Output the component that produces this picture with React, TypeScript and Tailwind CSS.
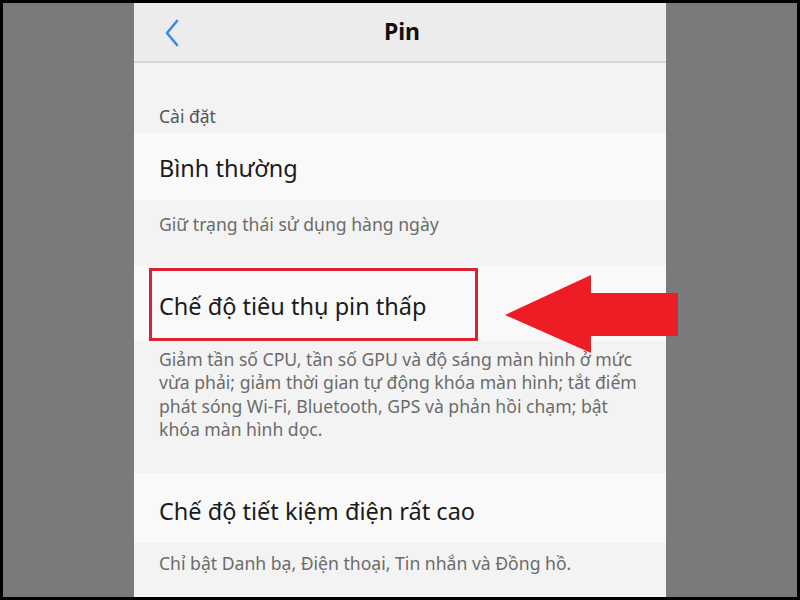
import React from "react";

const font = { fontFamily: "'Noto Sans', 'Open Sans', Arial, sans-serif" };

function BackChevron() {
  return (
    <svg width="20" height="30" viewBox="0 0 20 30" fill="none">
      <path d="M15 3 L5 15 L15 27" stroke="#3b8de0" strokeWidth="2.6" strokeLinecap="round" strokeLinejoin="round" />
    </svg>
  );
}

function Arrow() {
  return (
    <svg className="absolute left-[500px] top-[270px]" width="180" height="82" viewBox="0 0 180 82">
      <polygon points="2,42 88,2 88,20 175,20 175,63 88,63 88,80" fill="#ee1c25" />
    </svg>
  );
}

export default function App() {
  return (
    <div className="w-[800px] h-[600px] bg-black p-[3px]" style={font}>
      <div className="relative flex h-full bg-[#7b7a7b]">
        <div className="w-[131px] shrink-0" />
        <div className="w-[532px] shrink-0 flex flex-col bg-[#f3f3f3] overflow-hidden">
          {/* top bar */}
          <div className="relative h-[60px] shrink-0 flex items-center justify-center bg-[#ececec] border-b-2 border-[#d7d7d7]">
            <div className="absolute left-[28px] top-[15px]">
              <BackChevron />
            </div>
            <span className="text-[23px] font-bold text-[#111] pl-[4px] pb-[2px]">Pin</span>
          </div>

          {/* section label */}
          <div className="h-[70px] shrink-0 flex items-end pb-[4px] pl-[25px] text-[17.5px] text-[#555]">
            Cài đặt
          </div>

          {/* Normal mode */}
          <div className="h-[67px] shrink-0 flex items-center pl-[25px] bg-[#f9f9f9] text-[23.5px] text-[#1b1b1b] pt-[4px]">
            Bình thường
          </div>
          <div className="h-[66px] shrink-0 pl-[25px] pt-[11px] text-[17.6px] text-[#6b6b6b]">
            Giữ trạng thái sử dụng hàng ngày
          </div>

          {/* Low power mode */}
          <div className="relative h-[75px] shrink-0 flex items-center pl-[25px] bg-[#f9f9f9] text-[23.5px] text-[#1b1b1b] pt-[7px]">
            Chế độ tiêu thụ pin thấp
            <div className="absolute left-[15px] top-[2px] w-[329px] h-[73px] border-[3px] border-[#dc2230]" />
          </div>
          <div className="h-[132px] shrink-0 pl-[25px] pr-[22px] pt-[7px] text-[17.6px] leading-[23.3px] text-[#6b6b6b]">
            Giảm tần số CPU, tần số GPU và độ sáng màn hình ở mức vừa phải; giảm thời gian tự động khóa màn hình; tắt điểm phát sóng Wi-Fi, Bluetooth, GPS và phản hồi chạm; bật khóa màn hình dọc.
          </div>

          {/* Super power saving */}
          <div className="h-[70px] shrink-0 flex items-center pl-[25px] bg-[#f9f9f9] text-[23.5px] text-[#1b1b1b] pt-[7px]">
            Chế độ tiết kiệm điện rất cao
          </div>
          <div className="flex-1 pl-[25px] pt-[7px] text-[17.6px] text-[#6b6b6b]">
            Chỉ bật Danh bạ, Điện thoại, Tin nhắn và Đồng hồ.
          </div>
        </div>
        <div className="flex-1" />
        <Arrow />
      </div>
    </div>
  );
}
